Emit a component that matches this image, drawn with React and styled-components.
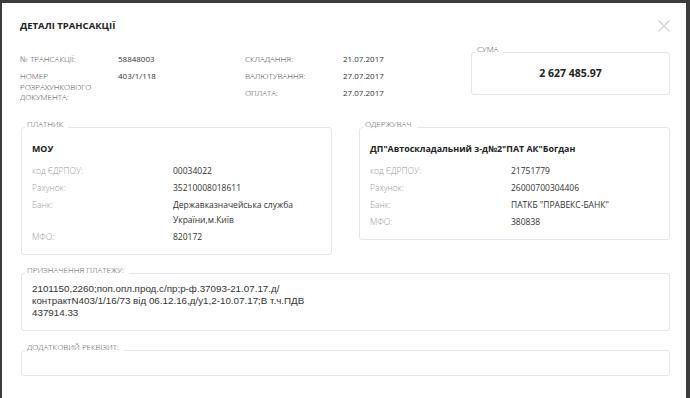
import React from 'react'
import styled, { createGlobalStyle } from 'styled-components'

const GlobalStyle = createGlobalStyle`
  html, body {
    margin: 0;
    padding: 0;
    background: #3d3d3d;
    font-family: 'Open Sans', 'Liberation Sans', sans-serif;
    color: #333;
  }
`

const Modal = styled.div`
  background: #fff;
  margin: 3px 4px 0 2px;
  padding: 16px 16px 40px 18px;
`

const Header = styled.div`
  display: flex;
  justify-content: space-between;
  align-items: flex-start;
`

const Title = styled.h1`
  margin: 0;
  font-size: 9.5px;
  line-height: 14px;
  font-weight: 700;
  color: #222;
`

const Close = styled.button`
  border: 0;
  background: none;
  padding: 0;
  margin-top: 1px;
  width: 12px;
  height: 12px;
  display: flex;
  cursor: pointer;
`

const Info = styled.div`
  display: flex;
  align-items: flex-start;
  margin-top: 11px;
`

const InfoCol = styled.div`
  width: ${p => p.width}px;
  padding-top: 10px;
  display: grid;
  grid-template-columns: 98px 1fr;
  row-gap: 6.5px;
  font-size: 8px;
  line-height: 10.5px;
`

const InfoLabel = styled.div`
  text-transform: uppercase;
  color: #444;
  font-weight: 300;
`

const InfoValue = styled.div`
  color: #333;
`

const Box = styled.fieldset`
  margin: 0 0 0 1px;
  padding: ${p => p.pad || '0 10px 10px'};
  border: 1px solid #e2e6ef;
  border-radius: 3px;
  min-width: 0;
`

const Legend = styled.legend`
  margin-left: -7px;
  padding: 0 5px 7px 2px;
  font-size: 8px;
  line-height: 10px;
  color: #555;
  font-weight: 300;
  text-transform: uppercase;
`

const SumBox = styled(Box)`
  width: 199px;
  box-sizing: border-box;
  margin-left: 0;
`

const Amount = styled.div`
  text-align: center;
  font-size: 10.5px;
  line-height: 15px;
  font-weight: 700;
  color: #222;
  padding: 4.5px 0 13.5px;
`

const Parties = styled.div`
  display: grid;
  grid-template-columns: 1fr 1fr;
  column-gap: 26px;
  align-items: start;
  margin-top: 16px;
`

const PartyName = styled.div`
  font-size: 8.9px;
  line-height: 15px;
  font-weight: 700;
  color: #222;
  margin-bottom: 7px;
`

const PartyGrid = styled.div`
  display: grid;
  grid-template-columns: 141px 1fr;
  row-gap: 2px;
  font-size: 8.5px;
  line-height: 15px;
`

const PartyLabel = styled.div`
  color: #999;
  font-weight: 300;
`

const PartyValue = styled.div`
  color: #333;
`

const Wide = styled(Box)`
  margin-top: ${p => p.top}px;
`

const Purpose = styled.div`
  font-family: 'Liberation Sans', Arial, sans-serif;
  font-size: 9.8px;
  line-height: 12px;
  color: #333;
  white-space: pre-line;
`

const Empty = styled.div`
  height: 16px;
`

const Field = ({ label, children }) => (
  <>
    <PartyLabel>{label}</PartyLabel>
    <PartyValue>{children}</PartyValue>
  </>
)

const Party = ({ title, name, code, account, bank, mfo }) => (
  <Box pad='5px 10px 10px'>
    <Legend>{title}</Legend>
    <PartyName>{name}</PartyName>
    <PartyGrid>
      <Field label='код ЄДРПОУ:'>{code}</Field>
      <Field label='Рахунок:'>{account}</Field>
      <Field label='Банк:'>{bank}</Field>
      <Field label='МФО:'>{mfo}</Field>
    </PartyGrid>
  </Box>
)

export default function App() {
  return (
    <>
      <GlobalStyle />
      <Modal>
        <Header>
          <Title>ДЕТАЛІ ТРАНСАКЦІЇ</Title>
          <Close aria-label='Закрити'>
            <svg width='12' height='12' viewBox='0 0 12 12'>
              <path d='M0.5 0.5 L11.5 11.5 M11.5 0.5 L0.5 11.5' stroke='#cfcfcf' strokeWidth='1.1' fill='none' />
            </svg>
          </Close>
        </Header>

        <Info>
          <InfoCol width={225}>
            <InfoLabel>№ трансакції:</InfoLabel>
            <InfoValue>58848003</InfoValue>
            <InfoLabel>Номер<br />розрахункового<br />документа:</InfoLabel>
            <InfoValue>403/1/118</InfoValue>
          </InfoCol>
          <InfoCol width={226}>
            <InfoLabel>Складання:</InfoLabel>
            <InfoValue>21.07.2017</InfoValue>
            <InfoLabel>Валютування:</InfoLabel>
            <InfoValue>27.07.2017</InfoValue>
            <InfoLabel>Оплата:</InfoLabel>
            <InfoValue>27.07.2017</InfoValue>
          </InfoCol>
          <SumBox pad='0 10px'>
            <Legend>Сума</Legend>
            <Amount>2 627 485.97</Amount>
          </SumBox>
        </Info>

        <Parties>
          <Party
            title='Платник'
            name='МОУ'
            code='00034022'
            account='35210008018611'
            bank={<>Державказначейська служба<br />України,м.Київ</>}
            mfo='820172'
          />
          <Party
            title='Одержувач'
            name='ДП"Автоскладальний з-д№2"ПАТ АК"Богдан'
            code='21751779'
            account='26000700304406'
            bank='ПАТКБ "ПРАВЕКС-БАНК"'
            mfo='380838'
          />
        </Parties>

        <Wide top={10} pad='1px 10px 11px'>
          <Legend>Призначення платежу:</Legend>
          <Purpose>
            {'2101150,2260;поп.опл.прод.с/пр;р-ф.37093-21.07.17.д/\nконтрактN403/1/16/73 від 06.12.16,д/у1,2-10.07.17;В т.ч.ПДВ\n437914.33'}
          </Purpose>
        </Wide>

        <Wide top={11} pad='0 10px'>
          <Legend>Додатковий реквізит:</Legend>
          <Empty />
        </Wide>
      </Modal>
    </>
  )
}
